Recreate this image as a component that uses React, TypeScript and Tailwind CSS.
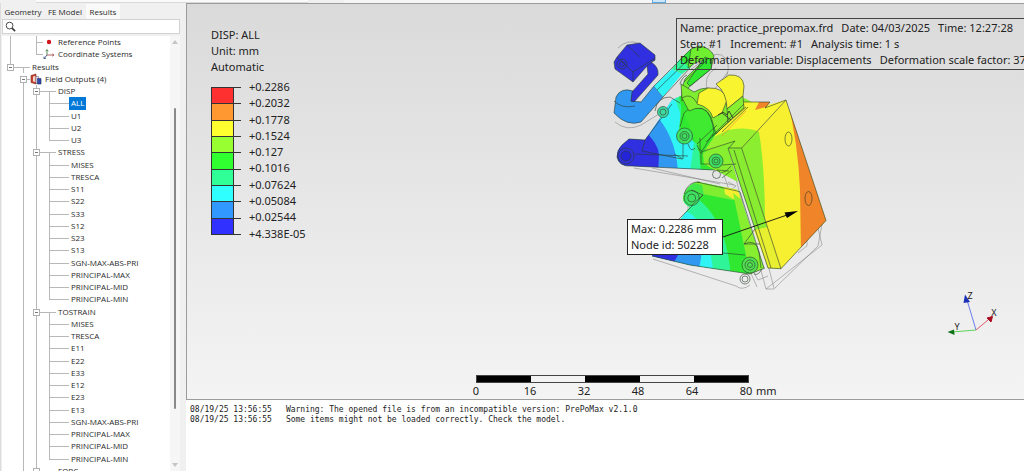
import { useState } from "react"

type Row = { guides: string; label: string; icon?: "point" | "axes" | "results" }

const stressItems = ["S11", "S22", "S33", "S12", "S23", "S13"]
const strainItems = ["E11", "E22", "E33", "E12", "E23", "E13"]
const invariants = ["SGN-MAX-ABS-PRI", "PRINCIPAL-MAX", "PRINCIPAL-MID", "PRINCIPAL-MIN"]

// one character per 13px guide cell
const leaves = (labels: string[]): Row[] =>
  labels.map((label, i) => ({
    guides: i === labels.length - 1 ? " ||L-" : " ||+-",
    label,
  }))

const rows: Row[] = [
  { guides: "| +", label: "Reference Points", icon: "point" },
  { guides: "| L", label: "Coordinate Systems", icon: "axes" },
  { guides: "eT", label: "Results" },
  { guides: " s", label: "Field Outputs (4)", icon: "results" },
  { guides: " |ET", label: "DISP" },
  ...leaves(["ALL", "U1", "U2", "U3"]),
  { guides: " |ET", label: "STRESS" },
  ...leaves(["MISES", "TRESCA", ...stressItems, ...invariants]),
  { guides: " |ET", label: "TOSTRAIN" },
  ...leaves(["MISES", "TRESCA", ...strainItems, ...invariants]),
  { guides: " |ET", label: "FORC" },
]

const legend = [
  { value: "+0.2286", color: "bg-[#ff3030]" },
  { value: "+0.2032", color: "bg-[#ff9830]" },
  { value: "+0.1778", color: "bg-[#ffff30]" },
  { value: "+0.1524", color: "bg-[#98ff30]" },
  { value: "+0.127", color: "bg-[#30ff30]" },
  { value: "+0.1016", color: "bg-[#30ff98]" },
  { value: "+0.07624", color: "bg-[#30ffff]" },
  { value: "+0.05084", color: "bg-[#3098ff]" },
  { value: "+0.02544", color: "bg-[#3030ff]" },
]

const logLines = [
  "Warning: The opened file is from an incompatible version: PrePoMax v2.1.0",
  "Some items might not be loaded correctly. Check the model.",
]

function Guide({ kind }: { kind: string }) {
  const up = "|+LEe".includes(kind)
  const down = "|+TEs".includes(kind)
  const right = "+LTEes-".includes(kind)
  const left = "T-".includes(kind)
  const box = "Ees".includes(kind)
  return (
    <span className="relative h-full w-[13px] shrink-0">
      {up && <span className="absolute top-0 left-[6px] h-1/2 w-px bg-[#b8b8b8]" />}
      {down && <span className="absolute bottom-0 left-[6px] h-1/2 w-px bg-[#b8b8b8]" />}
      {left && <span className="absolute top-1/2 left-0 h-px w-[6px] bg-[#b8b8b8]" />}
      {right && <span className="absolute top-1/2 left-[6px] h-px w-[7px] bg-[#b8b8b8]" />}
      {box && (
        <svg viewBox="0 0 7 7" className="absolute top-[3px] left-[3px] size-[7px]">
          <rect x=".5" y=".5" width="6" height="6" fill="#fff" stroke="#b0b0b0" />
          <path d="M2 3.5h3" stroke="#777" />
        </svg>
      )}
    </span>
  )
}

function RowIcon({ icon }: { icon: Row["icon"] }) {
  return (
    <svg viewBox="0 0 13 12" className="h-[12px] w-[13px] shrink-0">
      {icon === "point" && <circle cx="6" cy="6" r="2.2" fill="#d0131c" />}
      {icon === "axes" && (
        <g fill="none">
          <path d="M4 7V2M2.8 3.2L4 1.5l1.2 1.7" stroke="#5a8f5a" />
          <path d="M4 7h7M9.4 5.8L11 7l-1.6 1.2" stroke="#b06060" />
          <path d="M4 7L1 10.500M1 8.700v1.800h1.800" stroke="#49638f" />
        </g>
      )}
      {icon === "results" && (
        <g>
          <path d="M1 2.500L6 1v10L1 9.500z" fill="#c8402c" stroke="#7a2a20" strokeWidth=".6" />
          <path d="M3 3.500L5.500 3v6L3 8.500z" fill="#f1d9d0" />
          <path d="M6 3.500h2.500v7H6z" fill="#e9e9ee" stroke="#666a80" strokeWidth=".6" />
          <path d="M7.500 5.500h3.500v5.500H7.500z" fill="#3048a8" stroke="#1f2c66" strokeWidth=".6" />
        </g>
      )}
    </svg>
  )
}

function Sidebar() {
  const [selected, setSelected] = useState(5)
  return (
    <aside className="flex w-[186px] shrink-0 flex-col border-l border-[#dcdcdc] bg-[#f0f0f0] pr-[6px] pl-px font-['Open_Sans','Noto_Sans',sans-serif] text-[#2a2a2a]">
      <nav className="flex h-[16px] shrink-0 items-center text-[8px] leading-[15px]">
        <button className="w-[42px] pt-px text-center">Geometry</button>
        <button className="w-[42px] pt-px text-center">FE Model</button>
        <button className="w-[34px] bg-[#fafafa] text-center">Results</button>
      </nav>
      <label className="flex h-[15px] shrink-0 items-center border border-[#d2d2d2] bg-white">
        <svg viewBox="0 0 12 12" className="ml-[2px] size-[11px]" fill="none" stroke="#3a3a3a">
          <circle cx="5" cy="5" r="3.700" />
          <path d="M7.700 7.700L11 11" strokeWidth="1.800" />
        </svg>
        <input aria-label="Search" className="min-w-0 flex-1 text-[8px] outline-none" />
      </label>
      <div className="mt-[2px] flex min-h-0 flex-1 bg-white">
        <div className="min-w-0 flex-1 overflow-hidden pl-[2px]">
          <ul className="grid h-[441px] auto-rows-fr">
            {rows.map((row, i) => (
              <li key={i} className="flex min-h-0 items-center">
                {row.guides.split("").map((kind, j) => (
                  <Guide key={j} kind={kind} />
                ))}
                {row.icon && <RowIcon icon={row.icon} />}
                <button
                  onClick={() => setSelected(i)}
                  className={
                    "h-full px-[2px] text-[8px] leading-[12px] whitespace-nowrap " +
                    (i === selected ? "bg-[#0078d7] text-white" : "")
                  }
                >
                  {row.label}
                </button>
              </li>
            ))}
          </ul>
        </div>
        <div className="flex w-[10px] shrink-0 flex-col items-center bg-[#f6f6f6] py-[4px]">
          <svg viewBox="0 0 6 4" className="h-[4px] w-[6px]" fill="#c4c4c4">
            <path d="M3 0l3 4H0z" />
          </svg>
          <div className="mt-[64px] h-[301px] w-[2px] rounded-full bg-[#8a8a8a]" />
          <svg viewBox="0 0 6 4" className="mt-auto h-[4px] w-[6px]" fill="#c4c4c4">
            <path d="M3 4l3-4H0z" />
          </svg>
        </div>
      </div>
    </aside>
  )
}

function Legend() {
  return (
    <div className="absolute top-[23px] left-[24px] leading-4">
      <p>DISP: ALL</p>
      <p>Unit: mm</p>
      <p>Automatic</p>
      <div className="mt-[4px] flex">
        <div className="mt-[8px] grid h-[148px] w-[30px] auto-rows-fr border-b border-[#333]">
          {legend.map((item) => (
            <div key={item.value} className="border-t border-[#333]">
              <div className={`h-full w-[23px] border-x border-[#333] ${item.color}`} />
            </div>
          ))}
        </div>
        <div className="ml-[8px] grid h-[163px] auto-rows-fr">
          {legend.map((item) => (
            <span key={item.value}>{item.value}</span>
          ))}
          <span>+4.338E-05</span>
        </div>
      </div>
    </div>
  )
}

function Model() {
  return (
    <svg
      viewBox="600 30 240 270"
      className="absolute top-[26px] left-[413px] h-[270px] w-[240px]"
      fill="none"
      stroke="#2c3a2c"
      strokeWidth=".6"
      strokeLinejoin="round"
    >
      <defs>
        <clipPath id="upper">
          <path d="M617 157Q617 150 622 145L629 139L645 140L660 118L672 100L690 92L716 106L728 130V165L717 170L632 166Q619 167 617 157z" />
        </clipPath>
        <clipPath id="lower">
          <path d="M652 256L690 207Q681 203 684 194Q689 184 697 181.700L738 190L750 226L764 268L750 274L690 265z" />
        </clipPath>
        <clipPath id="face">
          <path d="M741.700 148.300L786 100L826 220.500L781 268.700z" />
        </clipPath>
        <clipPath id="top">
          <path d="M706 146L744 102L770 102L768 105L786 100L741.700 148.300L728 148L712 153z" />
        </clipPath>
      </defs>

      {/* undeformed wireframe */}
      <g stroke="#777" strokeWidth=".5">
        <path d="M618 48q9-9 20-5M615 122q12 10 26 3l18-11M652 168L720 184M634 168l100 17M728 182l8 4-5 4" />
        <path d="M690 70l20-14q14-6 18 8 2 12-9 22M708 92q-6-16 8-24M714 90l14-18" />
        <path d="M728 150l38 139h8l44-43 5-27-37-116M766 289l56-44-4-17M774 288l-13-50M798 253l9-7V228" />
        <path d="M653 259L736 286q6 5 14-1M688 222v-18l6-9M757 287l-8-18M723 172l30 90M748 262l10 18 10-4" />
      </g>

      {/* upper bracket */}
      <g clipPath="url(#upper)" stroke="none">
        <path d="M610 90h130v90H610z" fill="#3098f0" />
        <path d="M610 130h33q15 12 16 25l-1 20h-48z" fill="#3030e0" />
        <path d="M654 113Q676 136 678 172H740V80H660z" fill="#30f4f4" />
        <path d="M673 92Q683 125 694 143L690 172H740V80H670z" fill="#30f498" />
        <path d="M678 92Q682 118 698 140L701 172H740V80H676z" fill="#30e830" />
        <path d="M700 150l10-8 20 2v30l-18-4z" fill="#50ee30" />
      </g>
      <path d="M617 157Q617 150 622 145L629 139L645 140L672 104M617 157Q619 167 632 166L715 170M645 140L642 151L682 159M634 154L688 156" />
      <circle cx="626" cy="156" r="5" fill="#2424d8" />
      <circle cx="626" cy="156" r="8" />
      <circle cx="663" cy="112" r="5.500" fill="#40d8a0" />
      <circle cx="663" cy="112" r="3" />
      <path d="M655 111q2-14 15-14l10 6M683 128v31l-9-5" />

      {/* hook */}
      <path d="M614 113L616 97Q621 87 633 91L631 101L641 102L654 86L663 97L641 122Q627 127 614 113z" fill="#3098f0" />
      <path d="M654 86L672 69L682 74L663 97z" fill="#30f4f4" stroke="none" />
      <path d="M672 69L680 59L690 68L682 74z" fill="#30f498" stroke="none" />
      <path d="M680 59L691 49L700 56L690 68z" fill="#30e830" stroke="none" />
      <path d="M654 86L691 49M663 97L690 68M657 90L694 54" />
      <path d="M691 49L699 46Q710 47 714 56L711 69L688 88L690 96L682 101Q681 88 685 79L704 60L695 63L688 68Z" fill="#70ee30" />
      <path d="M705 57L712 60L711 69L690 86L687 83z" fill="#30e830" />
      <path d="M680 84Q682 77 687 75M684 82L706 61M614 101q8 8 21 5" />
      <path d="M614 62L617 57L627 45L640 43L655 55V60L651 62Q659 67 658 75L634 102L631 101L632 92L648 74L647 66L633 82L615 69z" fill="#3030e0" />
      <path d="M617 57L633 72L655 58M633 82V72M627 45L640 57M647 66L655 60" />
      <circle cx="622" cy="64" r="5" />
      <circle cx="622" cy="64" r="2.500" />

      {/* plate, top side */}
      <path d="M703 150L712 118L744 98L752 102L728 148L712 153z" fill="#88ee30" stroke="none" />
      <g clipPath="url(#top)" stroke="none">
        <path d="M700 90h100v70H700z" fill="#f8f430" />
        <path d="M700 144L728 130Q746 126 760 132L740 155H700z" fill="#98f030" />
      </g>
      <path d="M759 102L770 102L766 107L755 110z" fill="#f08428" stroke="none" />

      {/* clevis in the middle */}
      <path d="M682 102L690 94L712 106L716 134L703 153L697 150L704 142L696 143L679 130z" fill="#30e830" stroke="none" />
      <path d="M684 113Q691 105 704 109Q712 115 714 132L702 151Q698 150 697 145M684 113L680 127" fill="#40ea30" />
      <path d="M681 84L682 98L689 111Q704 103 711 117L716 134L728 122V108L720 92Q707 84 694 92z" fill="#80ee30" />
      <path d="M699 93L708 88Q724 87 727 100L722 113L713 118Q710 107 697 104z" fill="#f8f430" />
      <path d="M716 84L729 75Q743 74 744 86L743 96L727 109Q727 93 716 84z" fill="#f8f430" />
      <path d="M727 109L743 96L744 108L728 122z" fill="#88ee30" />
      <path d="M682 98Q691 92 697 103" />
      <circle cx="684.500" cy="136" r="8" fill="#40e060" />
      <circle cx="684.500" cy="136" r="4.500" />
      <circle cx="684.500" cy="136" r="2.500" />
      <path d="M688 144q3 9 7 4M697 144l20-19M700 138v14l16 8M706 142l40-35" />
      <path d="M718 115l5-3 4 3 2-4 4 7M722 113l9 7" stroke="#222" strokeWidth=".8" />

      <path d="M703 153L735 141L731 147L728 148L738 182L704 164z" fill="#88ee30" stroke="none" />
      <path d="M701 152L735 141L728 149M701 152V164L716 164M744 102H770L765 108L786 100M712 136L744 104M722 132L748 107" />
      <path d="M722 136L746 111" stroke="#f08428" />

      {/* plate, front side */}
      <g stroke="none">
        <path d="M728 148H741.700L781 268.700L768 268z" fill="#88ec30" />
        <path d="M754 230L768 227L781 268.700L768 268z" fill="#e8ee30" />
      </g>
      <g clipPath="url(#face)" stroke="none">
        <path d="M730 90h110v190H730z" fill="#f6f030" />
        <path d="M730 150L744 131Q752 128 759 132Q765 168 765 224H730z" fill="#8cee30" />
        <path d="M786 95Q798 140 800 190L801 255H840V95z" fill="#f08428" />
      </g>
      <path d="M728 148H741.700L786 100L826 220.500L781 268.700L768 268z" />
      <path d="M741.700 148.300L781 268.700M734 150L771 268" />
      <ellipse cx="788.500" cy="139" rx="3.500" ry="7" />
      <ellipse cx="808.500" cy="198.500" rx="3.500" ry="7" />
      <circle cx="716" cy="161" r="7" fill="#40e060" />
      <circle cx="716" cy="161" r="4" />
      <circle cx="716" cy="161" r="2" />
      <circle cx="716.500" cy="174.500" r="4" />
      <path d="M721 173q6-1 10-7M722 178l10-8M722 165l14-1M717 170l12 1" />

      {/* lower bracket */}
      <g clipPath="url(#lower)" stroke="none">
        <path d="M640 175h135v105H640z" fill="#30e830" />
        <path d="M640 175h100l-7 25-30-6-12 14-20-4z" fill="#80ee30" />
        <path d="M680 180l22 5 2 10-14 11-12-4z" fill="#40e848" />
        <path d="M724 186l14 4 6 18q-8-8-19-14z" fill="#f4f030" />
        <path d="M640 300V210L697 198Q728 222 731 280H640z" fill="#30f498" />
        <path d="M640 300V215L688 212Q710 225 714 280H640z" fill="#30f4f4" />
        <path d="M640 300V242H702Q703 256 696 280H640z" fill="#3098f0" />
        <path d="M640 300V244H680Q680 256 672 264V280H640z" fill="#3030e0" />
        <path d="M733 193L742 200L764 268L750 274z" fill="#88ee30" />
      </g>
      <path d="M652 256L690 265L750 274L765 268M697 182L740 191.700M703 195L674 224M740 192L764 268M744 244q12-6 15 8l2 16" />
      <circle cx="691.700" cy="198" r="7.500" fill="#40e060" />
      <circle cx="691.700" cy="198" r="4" />
      <path d="M684 194q4-13 16-12M691 190l12 5-12 11" />
      <circle cx="750" cy="265" r="8" fill="#50e050" />
      <circle cx="750" cy="265" r="5" />
      <circle cx="750" cy="265" r="2.500" />
      <circle cx="745" cy="279" r="5" />
      <circle cx="745" cy="279" r="3" />
      <path d="M744 244L755 229M744 244h16M723 253l22 2M754 274q4 2 8-5" />

      <path d="M723 237L790 214" stroke="#111" strokeWidth=".9" />
      <path d="M798 211L784.500 212.500L787 218z" fill="#000" stroke="none" />
    </svg>
  )
}

function Triad() {
  return (
    <svg viewBox="944 288 60 52" className="absolute right-[20px] bottom-[60px] h-[52px] w-[60px]" fill="none">
      <path d="M976 331L967 301" stroke="#6a7cf0" />
      <path d="M976 331L952 333" stroke="#5cd45c" />
      <path d="M976 331L988 321" stroke="#e05a70" />
      <path d="M965 295.500L970 303L963.500 304z" fill="#1c30b8" />
      <path d="M947.500 333L954 330.500L954.500 336z" fill="#107018" />
      <path d="M992.500 317.500L991 323L987 319z" fill="#a80c20" stroke="#a80c20" />
      <g fill="#222" fontSize="9" textAnchor="middle">
        <text x="970" y="300">Z</text>
        <text x="957" y="331">Y</text>
        <text x="994" y="317">X</text>
      </g>
    </svg>
  )
}

function ScaleBar() {
  return (
    <div className="absolute top-[371px] left-[289px]">
      <div className="flex h-[8px] w-[273px] border border-[#444]">
        {[0, 1, 2, 3, 4].map((i) => (
          <div key={i} className={i % 2 ? "flex-1" : "flex-1 bg-black"} />
        ))}
      </div>
      <div className="-ml-[27px] flex leading-4">
        {["0", "16", "32", "48", "64", "80"].map((tick) => (
          <span key={tick} className="w-[54px] text-center">
            {tick}
          </span>
        ))}
        <span className="-ml-[17px]">mm</span>
      </div>
    </div>
  )
}

function Viewport() {
  return (
    <section className="relative min-h-0 flex-1 overflow-hidden border border-r-0 border-[#9c9c9c] bg-linear-to-b from-[#dadada] to-[#f4f4f4] font-['Noto_Sans',sans-serif] text-[11px] text-[#222]">
      <Legend />
      <Model />
      <div className="absolute top-[14px] left-[489px] border border-[#444] py-px pl-[3px] leading-4 whitespace-nowrap">
        <p className="flex gap-[8px]">
          <span>Name: practice_prepomax.frd</span>
          <span>Date: 04/03/2025</span>
          <span>Time: 12:27:28</span>
        </p>
        <p className="flex gap-[8px]">
          <span>Step: #1</span>
          <span>Increment: #1</span>
          <span>Analysis time: 1 s</span>
        </p>
        <p className="flex gap-[8px]">
          <span>Deformation variable: Displacements</span>
          <span>Deformation scale factor: 37</span>
        </p>
      </div>
      <div className="absolute top-[215px] left-[440px] w-[96px] border border-[#222] bg-white py-px pl-[3px] leading-4 whitespace-nowrap">
        <p>Max: 0.2286 mm</p>
        <p>Node id: 50228</p>
      </div>
      <Triad />
      <ScaleBar />
    </section>
  )
}

export default function App() {
  return (
    <div className="flex h-screen flex-col overflow-hidden bg-[#f0f0f0]">
      <header className="flex h-[3px] shrink-0">
        <div className="ml-[36px] w-[272px] border-b border-[#d8d8d8] bg-[#fafafa]" />
        <div className="ml-[36px] flex-1 bg-[#f6f6f6]" />
        <div className="mr-[24px] w-[14px] border border-t-0 border-[#5aa9e0] bg-[#cfe6f8]" />
        <div className="w-[334px] bg-[#fafafa]" />
      </header>
      <div className="flex min-h-0 flex-1">
        <Sidebar />
        <main className="flex min-w-0 flex-1 flex-col">
          <Viewport />
          <footer className="h-[71px] shrink-0 bg-white pt-[5px] pl-[4px] font-['DejaVu_Sans_Mono',monospace] text-[8px] leading-[10px] text-[#222]">
            {logLines.map((line) => (
              <p key={line} className="flex gap-[14px] whitespace-nowrap">
                <time>08/19/25 13:56:55</time>
                <span>{line}</span>
              </p>
            ))}
          </footer>
        </main>
      </div>
    </div>
  )
}
